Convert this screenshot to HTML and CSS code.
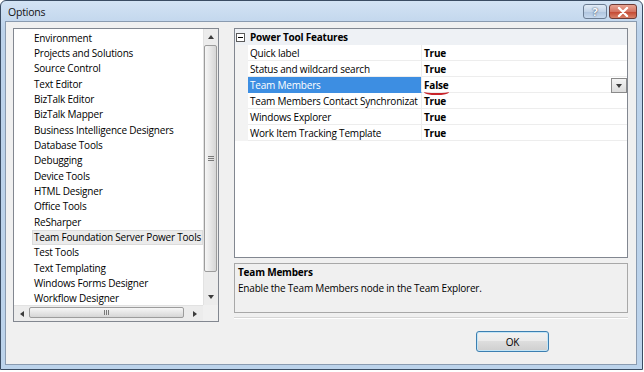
FILE: index.html
```html
<!DOCTYPE html>
<html>
<head>
<meta charset="utf-8">
<link rel="stylesheet" href="styles.css">
</head>
<body>
<div class="window">
  <div class="titlebar">
    <span class="title">Options</span>
    <div class="tb-buttons">
      <div class="tb-btn help">?</div>
      <div class="tb-btn close">
        <svg width="12" height="10" viewBox="0 0 12 10"><path d="M2 1 L10 9 M10 1 L2 9" stroke="#fff" stroke-width="2.4" stroke-linecap="round"/></svg>
      </div>
    </div>
  </div>
  <div class="client">
    <div class="listbox">
      <div class="list-top">
        <div class="items">
          <div class="item">Environment</div>
          <div class="item">Projects and Solutions</div>
          <div class="item">Source Control</div>
          <div class="item">Text Editor</div>
          <div class="item">BizTalk Editor</div>
          <div class="item">BizTalk Mapper</div>
          <div class="item">Business Intelligence Designers</div>
          <div class="item">Database Tools</div>
          <div class="item">Debugging</div>
          <div class="item">Device Tools</div>
          <div class="item">HTML Designer</div>
          <div class="item">Office Tools</div>
          <div class="item">ReSharper</div>
          <div class="item selected">Team Foundation Server Power Tools</div>
          <div class="item">Test Tools</div>
          <div class="item">Text Templating</div>
          <div class="item">Windows Forms Designer</div>
          <div class="item">Workflow Designer</div>
        </div>
        <div class="vscroll">
          <div class="sb-btn v"><span class="arr up"></span></div>
          <div class="vtrack">
            <div class="vthumb"><span class="grip-h"></span></div>
          </div>
          <div class="sb-btn v down-btn"><span class="arr down"></span></div>
        </div>
      </div>
      <div class="list-bottom">
        <div class="hscroll">
          <div class="sb-btn h"><span class="arr left"></span></div>
          <div class="hthumb"><span class="grip-v"></span></div>
          <div class="htrack"></div>
          <div class="sb-btn h right-btn"><span class="arr right"></span></div>
        </div>
        <div class="corner"></div>
      </div>
    </div>
    <div class="rightcol">
      <div class="grid">
        <div class="cat-row">
          <div class="gutter"><span class="expander"></span></div>
          <div class="cat-name">Power Tool Features</div>
        </div>
        <div class="prop-row">
          <div class="gutter"></div>
          <div class="pname">Quick label</div>
          <div class="pval">True</div>
        </div>
        <div class="prop-row">
          <div class="gutter"></div>
          <div class="pname">Status and wildcard search</div>
          <div class="pval">True</div>
        </div>
        <div class="prop-row active">
          <div class="gutter"></div>
          <div class="pname">Team Members</div>
          <div class="pval"><span class="mark">False</span><span class="dd"><span class="arr down"></span></span></div>
        </div>
        <div class="prop-row">
          <div class="gutter"></div>
          <div class="pname">Team Members Contact Synchronizat</div>
          <div class="pval">True</div>
        </div>
        <div class="prop-row">
          <div class="gutter"></div>
          <div class="pname">Windows Explorer</div>
          <div class="pval">True</div>
        </div>
        <div class="prop-row">
          <div class="gutter"></div>
          <div class="pname">Work Item Tracking Template</div>
          <div class="pval">True</div>
        </div>
      </div>
      <div class="desc">
        <div class="desc-title">Team Members</div>
        <div class="desc-text">Enable the Team Members node in the Team Explorer.</div>
      </div>
      <div class="sep"></div>
      <div class="buttons">
        <div class="ok">OK</div>
      </div>
    </div>
  </div>
</div>
</body>
</html>
```
FILE: styles.css
```css
* { box-sizing: border-box; }
html, body { margin: 0; padding: 0; background: #ffffff; }
body {
  width: 644px; height: 372px; overflow: hidden;
  font-family: "Open Sans", "Noto Sans", sans-serif;
  font-size: 10px; letter-spacing: -0.2px; color: #000;
}
.window {
  width: 643px; height: 370px;
  border: 1px solid #3a4c63;
  border-radius: 6px 6px 0 0;
  background: linear-gradient(#d3e3f4, #bcd2ea 30px, #bcd3eb);
  padding: 0 5px 4px 4px;
  display: flex; flex-direction: column;
}
.titlebar {
  height: 20px;
  display: flex; align-items: flex-start;
  padding-left: 3px;
}
.title {
  font-size: 10.5px; line-height: 12px; margin-top: 5px; color: #111;
}
.tb-buttons { margin-left: auto; display: flex; gap: 2px; margin-top: 3px; }
.tb-btn {
  height: 15px; border: 1px solid #6b7d93; border-radius: 3px;
  display: flex; align-items: center; justify-content: center;
}
.help {
  width: 24px;
  background: linear-gradient(#e2ecf7, #c3d4e8 50%, #aec4de 51%, #c7d9ee);
  color: #fff; font-weight: bold; font-size: 11px; line-height: 11px;
  text-shadow: 0 0 2px #4a5e78, 0 0 1px #4a5e78;
}
.close {
  width: 28px;
  border-color: #6d3a36;
  background: linear-gradient(#e8a493, #d47463 50%, #c2442f 51%, #d9826a);
}
.client {
  flex: 1;
  background: #f0f0f0;
  border: 1px solid #8a9bb0;
  padding: 6px 8px 0 7px;
  display: flex; align-items: flex-start; gap: 15px;
}
.listbox {
  width: 206px; height: 294px;
  border: 1px solid #828790;
  background: #fff;
  display: flex; flex-direction: column;
}
.list-top { height: 276px; display: flex; }
.items { flex: 1; overflow: hidden; padding-top: 1.5px; }
.item {
  height: 15.35px; line-height: 15px;
  padding-left: 2px; margin-left: 18px;
  white-space: nowrap; overflow: hidden;
}
.item.selected { background: #ebebeb; box-shadow: inset 0 0 0 1px #dcdcdc; }
.vscroll {
  width: 15px; background: #ececec;
  border-left: 1px solid #e2e2e2;
  display: flex; flex-direction: column;
}
.sb-btn { display: flex; align-items: center; justify-content: center; }
.sb-btn.v { height: 16px; }
.sb-btn.v.down-btn { height: 17px; }
.vtrack { flex: 1; padding: 0 1px 16px 0; display: flex; }
.vthumb {
  flex: 1;
  border: 1px solid #9c9c9c; border-radius: 2px;
  background: linear-gradient(90deg, #f6f6f6, #e6e6e6 50%, #d6d6d6);
  display: flex; align-items: center; justify-content: center;
}
.grip-h {
  width: 6px; height: 5px;
  border-top: 1px solid #7a7a7a; border-bottom: 1px solid #7a7a7a;
  position: relative;
}
.grip-h::after {
  content: ""; position: absolute; left: 0; right: 0; top: 1px; height: 1px; background: #7a7a7a;
}
.arr { width: 0; height: 0; border-style: solid; }
.arr.up { border-width: 0 3.5px 4px 3.5px; border-color: transparent transparent #3c3c3c transparent; }
.arr.down { border-width: 4px 3.5px 0 3.5px; border-color: #3c3c3c transparent transparent transparent; }
.arr.left { border-width: 3.5px 4px 3.5px 0; border-color: transparent #3c3c3c transparent transparent; }
.arr.right { border-width: 3.5px 0 3.5px 4px; border-color: transparent transparent transparent #3c3c3c; }
.list-bottom { height: 16px; display: flex; }
.hscroll {
  flex: 1; display: flex; background: #ececec;
  border-top: 1px solid #e2e2e2;
}
.sb-btn.h { width: 15px; }
.hthumb {
  width: 155px; margin: 1px 0 3px 0;
  border: 1px solid #9c9c9c; border-radius: 2px;
  background: linear-gradient(#f6f6f6, #e6e6e6 50%, #d6d6d6);
  display: flex; align-items: center; justify-content: center;
}
.grip-v {
  width: 5px; height: 5px;
  border-left: 1px solid #7a7a7a; border-right: 1px solid #7a7a7a;
  position: relative;
}
.grip-v::after {
  content: ""; position: absolute; top: 0; bottom: 0; left: 1px; width: 1px; background: #7a7a7a;
}
.htrack { flex: 1; }
.sb-btn.h.right-btn { width: 17px; }
.corner { width: 15px; background: #f0f0f0; }

.rightcol { width: 394px; display: flex; flex-direction: column; }
.grid {
  height: 230px; border: 1px solid #828790; background: #fff;
}
.cat-row {
  height: 16px; display: flex; background: #eef1f5;
}
.gutter { width: 13px; flex: none; background: #f3f3f3; display: flex; align-items: center; justify-content: center; }
.cat-row .gutter { background: #eef1f5; justify-content: flex-start; padding-left: 1px; }
.expander {
  width: 9px; height: 9px; border: 1px solid #5b5b5b; background: #fff; position: relative;
}
.expander::after {
  content: ""; position: absolute; left: 1px; right: 1px; top: 3px; height: 1px; background: #000;
}
.cat-name { font-weight: bold; line-height: 16px; padding-left: 2px; }
.prop-row { height: 16px; display: flex; }
.pname {
  width: 174px; flex: none; line-height: 15px; padding: 1px 0 0 2px;
  white-space: nowrap; overflow: hidden;
  border-bottom: 1px solid #ededed; border-right: 1px solid #ededed;
}
.pval {
  flex: 1; line-height: 15px; padding: 1px 0 0 2px; font-weight: bold;
  border-bottom: 1px solid #ededed;
  display: flex; align-items: flex-start;
}
.prop-row.active .pname { background: #3d8ee2; color: #fff; border-bottom-color: #3d8ee2; }
.mark { border-bottom: 2px solid #c8242a; border-radius: 0 0 50% 50% / 0 0 3px 3px; height: 17px; padding-right: 1px; }
.dd {
  margin-left: auto; margin-top: 0; margin-right: 0;
  width: 16px; height: 15px;
  border: 1px solid #8a8a8a;
  background: linear-gradient(#f4f4f4, #dcdcdc);
  display: flex; align-items: center; justify-content: center;
}
.desc {
  margin-top: 5px; height: 50px;
  border: 1px solid #a8a8a8; background: #f0f0f0;
  padding: 1px 3px;
}
.desc-title { font-weight: bold; line-height: 15px; }
.desc-text { line-height: 16px; }
.sep {
  margin-top: 4px; height: 2px; border-top: 1px solid #d5d5d5; border-bottom: 1px solid #fff;
}
.buttons { display: flex; padding-left: 242px; margin-top: 12px; }
.ok {
  width: 73px; height: 21px;
  border: 1px solid #3c7fb1; border-radius: 3px;
  background: linear-gradient(#f2f2f2, #ebebeb 45%, #dddddd 50%, #cfcfcf);
  box-shadow: inset 0 0 0 1px #c4e5f6;
  display: flex; align-items: center; justify-content: center;
}
```
